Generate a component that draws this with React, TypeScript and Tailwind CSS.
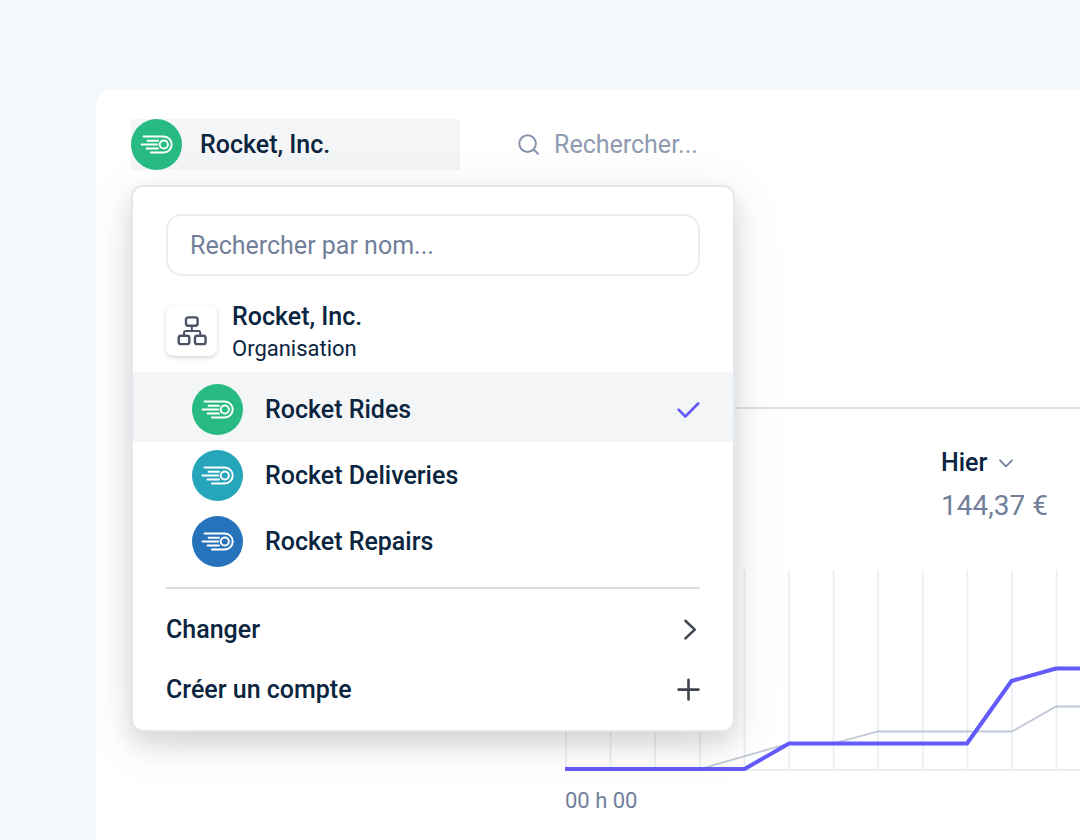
import { useState } from "react";

interface Account {
  name: string;
  color: string;
}

const accounts: Account[] = [
  { name: "Rocket Rides", color: "bg-[#27bb83]" },
  { name: "Rocket Deliveries", color: "bg-[#27a5bb]" },
  { name: "Rocket Repairs", color: "bg-[#2773bb]" },
];

const hours = Array.from({ length: 25 }, (_, i) => i);

const RocketLogo = ({ color }: { color: string }) => (
  <span className={`size-[51px] shrink-0 rounded-full ${color}`}>
    <svg
      viewBox="0 0 51 51"
      className="size-full"
      fill="none"
      stroke="white"
      strokeWidth="2"
      strokeLinecap="round"
      aria-hidden="true"
    >
      <path d="M12.6 17.6H32.8a7.9 7.9 0 0 1 0 15.8H20" />
      <path d="M16.6 21.7H27M10.6 25.5H26.2M15.6 29.4H27" />
      <circle cx="32.8" cy="25.5" r="4.1" />
    </svg>
  </span>
);

const OrganisationIcon = () => (
  <span className="size-[51px] shrink-0 rounded-lg bg-white shadow-[0_2px_5px_rgba(60,66,87,0.16),0_1px_2px_rgba(0,0,0,0.08)]">
    <svg
      viewBox="0 0 51 51"
      className="size-full"
      fill="none"
      stroke="#4b5263"
      strokeWidth="2.4"
      aria-hidden="true"
    >
      <rect x="20" y="12.4" width="11.6" height="8.4" rx="2.2" />
      <rect x="12.7" y="30.7" width="10.6" height="8.4" rx="2.2" />
      <rect x="29" y="30.7" width="10.6" height="8.4" rx="2.2" />
      <path d="M25.8 20.8v5.3M18 30.5v-2.2a2.2 2.2 0 0 1 2.2-2.2h11.9a2.2 2.2 0 0 1 2.2 2.2v2.2" strokeWidth="2" />
    </svg>
  </span>
);

const AccountMenu = () => {
  const [selected, setSelected] = useState("Rocket Rides");

  return (
    <div className="absolute top-full left-0 z-10 mt-[15px] w-[604px] rounded-xl border-2 border-[#e3e8ee] bg-white pt-[27px] pb-[10px] shadow-[0_12px_24px_rgba(0,0,0,0.12),0_10px_60px_rgba(0,0,0,0.08)]">
      <div className="px-[33px]">
        <input
          type="text"
          aria-label="Rechercher par nom"
          placeholder="Rechercher par nom..."
          className="block h-[62px] w-full rounded-2xl border-2 border-[#ebeef1] px-[22px] text-[#0a2540] outline-none placeholder:text-[#727f9a]"
        />
        <div className="flex items-start gap-[15px] pt-[25px] pb-[7px]">
          <span className="flex pt-1">
            <OrganisationIcon />
          </span>
          <div className="leading-8">
            <p className="font-medium">Rocket, Inc.</p>
            <p className="text-[22px]">Organisation</p>
          </div>
        </div>
      </div>

      {accounts.map(({ name, color }) => (
        <button
          key={name}
          type="button"
          onClick={() => setSelected(name)}
          className={`flex w-full items-center gap-[22px] pr-[33px] pl-[59px] text-left font-medium ${
            name === selected ? "bg-[#f4f5f7] pt-3 pb-[7px]" : "pt-2 pb-[7px]"
          }`}
        >
          <RocketLogo color={color} />
          <span className="flex-1">{name}</span>
          {name === selected && (
            <svg viewBox="0 0 24 24" className="size-6" fill="none" stroke="#625afa" strokeWidth="2.6" strokeLinecap="round" strokeLinejoin="round" aria-hidden="true">
              <path d="M2.6 11.7 9.3 18.5 22.2 5.5" />
            </svg>
          )}
        </button>
      ))}

      <div className="px-[33px]">
        <hr className="mt-[13px] mb-[11px] border-t-2 border-[#d8dee4]" />
        <button type="button" className="flex h-[60px] w-full items-center justify-between font-medium">
          Changer
          <svg viewBox="0 0 24 24" className="size-6" fill="none" stroke="#414552" strokeWidth="2.6" strokeLinecap="round" strokeLinejoin="round" aria-hidden="true">
            <path d="M9.4 2.8 18.8 11.6 9.4 20.4" />
          </svg>
        </button>
        <button type="button" className="flex h-[60px] w-full items-center justify-between font-medium">
          Créer un compte
          <svg viewBox="0 0 24 24" className="size-6" fill="none" stroke="#414552" strokeWidth="2.6" strokeLinecap="round" aria-hidden="true">
            <path d="M12.5 1.8v19.6M2.5 11.6h20" />
          </svg>
        </button>
      </div>
    </div>
  );
};

const Chart = () => (
  <svg className="block h-[206px] w-full" fill="none" role="img" aria-label="Volume par heure">
    {hours.map((h) => (
      <line key={h} x1={1 + h * 44.6} x2={1 + h * 44.6} y1="0" y2="200" stroke="#ebeef1" strokeWidth="1.8" />
    ))}
    <line x1="0" x2="1072" y1="200" y2="200" stroke="#ebeef1" strokeWidth="1.8" />
    <path d="M0 199H135L224 173.5H268L313 161.5H447L491 136.5H1072" stroke="#c0c8d6" strokeWidth="1.8" />
    <path d="M0 199H179.5L224 173.5H402L446.5 111L491 98.5H1072" stroke="#625afa" strokeWidth="4" strokeLinejoin="round" />
  </svg>
);

const App = () => {
  return (
    <div className="flex min-h-screen flex-col overflow-hidden bg-[#f5f9fc] pt-[90px] pl-24 font-[Roboto,sans-serif] text-[25px] leading-8 text-[#0a2540]">
      <main className="-mr-2 flex-1 overflow-hidden rounded-t-2xl bg-white pt-[29px] pl-[35px]">
        <header className="flex items-center gap-[58px]">
          <div className="relative">
            <button type="button" aria-expanded="true" className="flex w-[329px] items-center gap-[18px] bg-[#f4f5f7] text-left font-medium">
              <RocketLogo color="bg-[#27bb83]" />
              Rocket, Inc.
            </button>
            <AccountMenu />
          </div>
          <label className="flex flex-1 items-center gap-[14px]">
            <svg viewBox="0 0 22 22" className="size-[22px] shrink-0" fill="none" stroke="#8792ab" strokeWidth="2" strokeLinecap="round" aria-hidden="true">
              <circle cx="9.6" cy="9.6" r="8.3" />
              <path d="m15.6 15.6 4.4 4.2" />
            </svg>
            <input
              type="text"
              aria-label="Rechercher"
              placeholder="Rechercher..."
              className="w-full min-w-0 outline-none placeholder:text-[#8f9bb0]"
            />
          </label>
        </header>

        <section className="mt-[237px] border-t-2 border-[#dfe4ea] pl-[434px]">
          <div className="flex justify-end pt-[38px]">
            <div className="w-[147px]">
              <button type="button" className="flex items-center gap-3 font-medium">
                Hier
                <svg viewBox="0 0 14 14" className="size-[14px]" fill="none" stroke="#727f9a" strokeWidth="1.8" strokeLinecap="round" strokeLinejoin="round" aria-hidden="true">
                  <path d="m1 4.3 6 6 6-6" />
                </svg>
              </button>
              <p className="mt-[11px] text-[28px] text-[#727f9a]">144,37 €</p>
            </div>
          </div>
          <div className="pt-12">
            <Chart />
            <p className="mt-[9px] text-[22px] text-[#727f9a]">00 h 00</p>
          </div>
        </section>
      </main>
    </div>
  );
};

export default App;
